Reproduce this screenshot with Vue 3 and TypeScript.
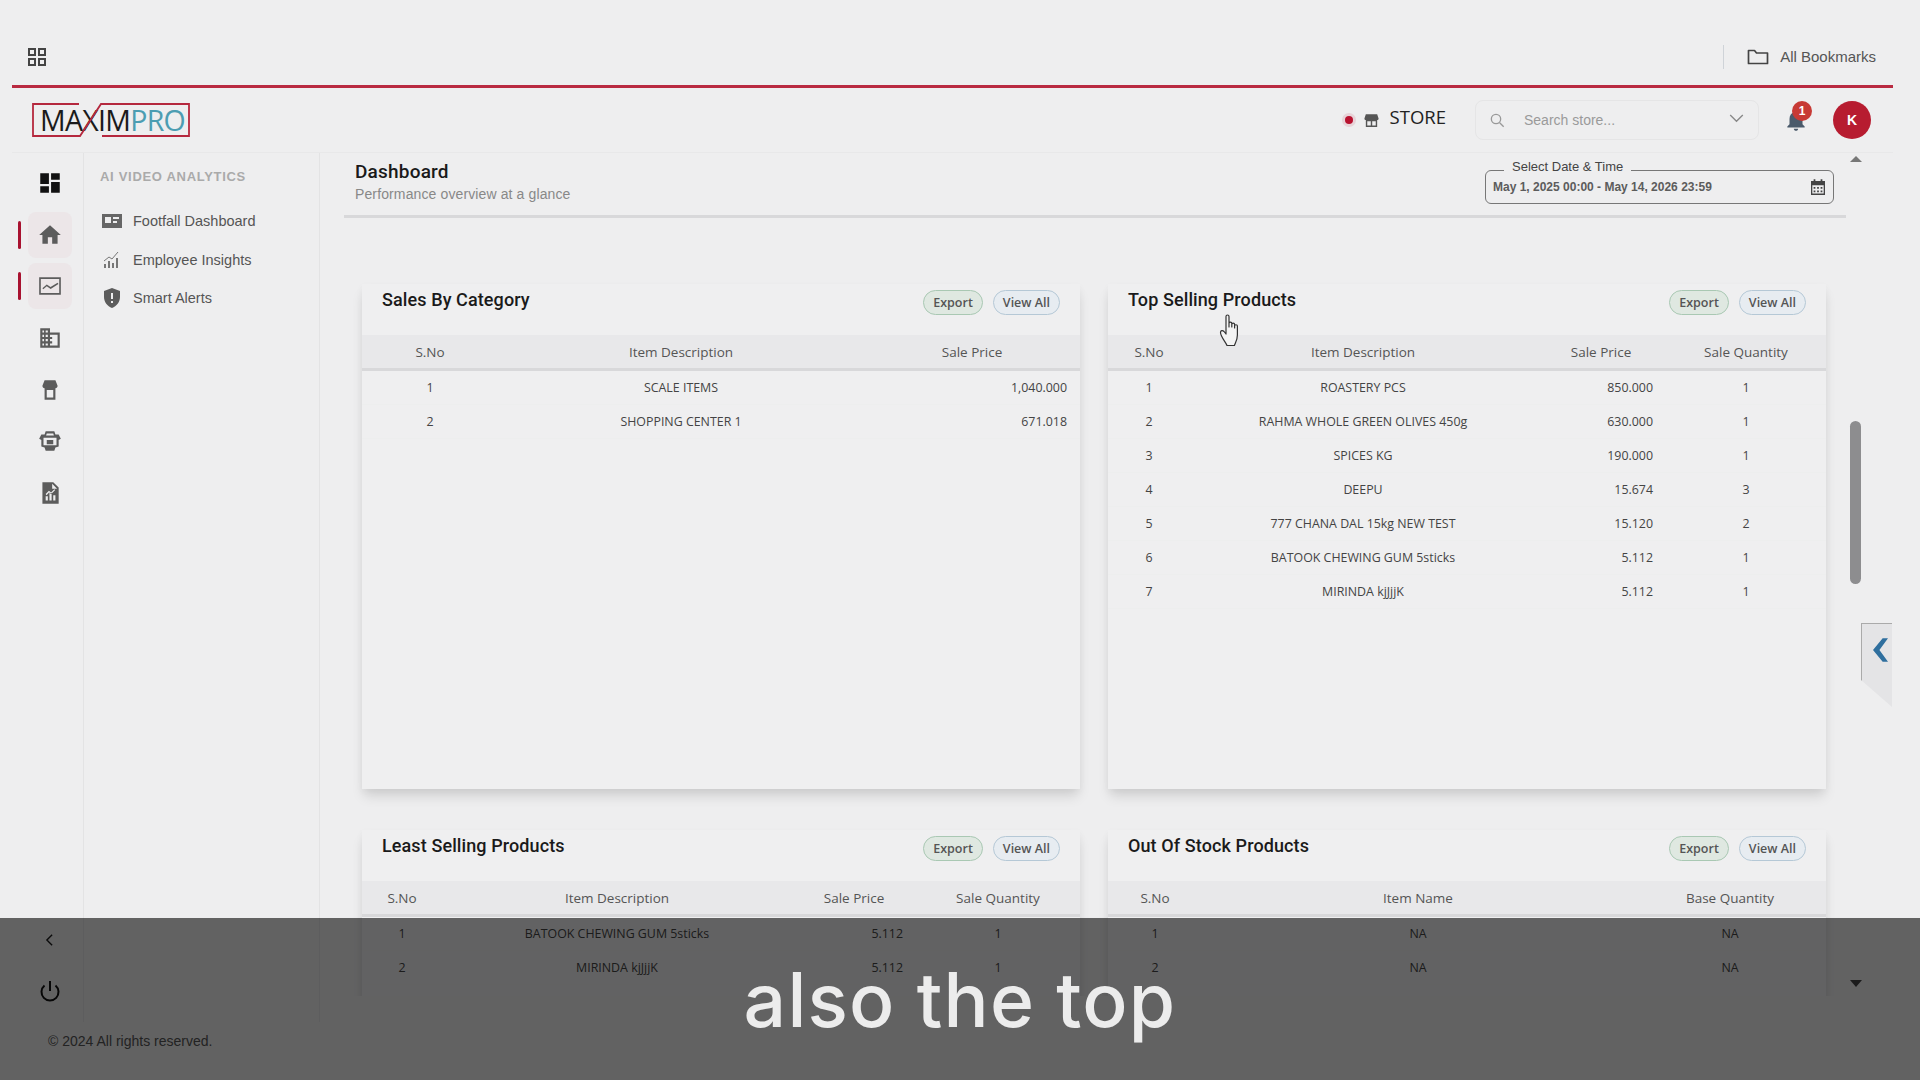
<script setup lang="ts">
interface Column {
  label: string;
  width: number;
  align?: 'right';
}

interface Card {
  title: string;
  columns: Column[];
  rows: string[][];
}

const railIcons = [
  { name: 'dashboard', path: 'M3 13h8V3H3v10zm0 8h8v-6H3v6zm10 0h8V11h-8v10zm0-18v6h8V3h-8z', active: false, dark: true },
  { name: 'home', path: 'M10 20v-6h4v6h5v-8h3L12 3 2 12h3v8z', active: true },
  { name: 'analytics', path: 'M2 4h20v16H2V4zm1.5 1.5v13h17v-13h-17zM5 14l4-3.5 3.5 2.5L19 9l.8 1.1-7.2 4.7L9 12.3l-3.2 2.8L5 14z', active: true },
  { name: 'business', path: 'M12 7V3H3v18h18V7h-9zM6.500 19H5v-2h1.500v2zm0-4H5v-2h1.500v2zm0-4H5V9h1.500v2zm0-4H5V5h1.500v2zM10 19H8v-2h2v2zm0-4H8v-2h2v2zm0-4H8V9h2v2zm0-4H8V5h2v2zm9 12h-7v-2h2v-2h-2v-2h2v-2h-2V9h7v10z', active: false },
  { name: 'store', path: 'M7 3h10l2 5c0 1.300-.8 2.200-2 2.400V21H7V10.400C5.800 10.200 5 9.300 5 8l2-5zm2 9v7h6v-7H9z', active: false },
  { name: 'package', path: 'M8 3h8l1 3h3l2 4-2 1v6l-3 1-1 3H8l-1-3-3-1v-6l-2-1 2-4h3l1-3zm1 2-.6 2h7.2L15 5H9zm-3 4v7h12V9H6zm3 2h6v4H9v-4z', active: false },
  { name: 'report', path: 'M5 2h10l5 5v15H5V2zm9 1.5V8h4.500L14 3.500zM8 19h2v-4H8v4zm3.500 0h2v-7h-2v7zm3.500 0h2v-5h-2v5zM8 13l3-3 2 1.500 3-3 .8.8-3.700 3.700-2-1.500L8.800 14 8 13z', active: false },
];

const subItems = ['Footfall Dashboard', 'Employee Insights', 'Smart Alerts'];

const cards: Card[] = [
  {
    title: 'Sales By Category',
    columns: [
      { label: 'S.No', width: 136 },
      { label: 'Item Description', width: 366 },
      { label: 'Sale Price', width: 216, align: 'right' },
    ],
    rows: [
      ['1', 'SCALE ITEMS', '1,040.000'],
      ['2', 'SHOPPING CENTER 1', '671.018'],
    ],
  },
  {
    title: 'Top Selling Products',
    columns: [
      { label: 'S.No', width: 82 },
      { label: 'Item Description', width: 346 },
      { label: 'Sale Price', width: 130, align: 'right' },
      { label: 'Sale Quantity', width: 160 },
    ],
    rows: [
      ['1', 'ROASTERY PCS', '850.000', '1'],
      ['2', 'RAHMA WHOLE GREEN OLIVES 450g', '630.000', '1'],
      ['3', 'SPICES KG', '190.000', '1'],
      ['4', 'DEEPU', '15.674', '3'],
      ['5', '777 CHANA DAL 15kg NEW TEST', '15.120', '2'],
      ['6', 'BATOOK CHEWING GUM 5sticks', '5.112', '1'],
      ['7', 'MIRINDA kjJjjK', '5.112', '1'],
    ],
  },
  {
    title: 'Least Selling Products',
    columns: [
      { label: 'S.No', width: 80 },
      { label: 'Item Description', width: 350 },
      { label: 'Sale Price', width: 124, align: 'right' },
      { label: 'Sale Quantity', width: 164 },
    ],
    rows: [
      ['1', 'BATOOK CHEWING GUM 5sticks', '5.112', '1'],
      ['2', 'MIRINDA kjJjjK', '5.112', '1'],
    ],
  },
  {
    title: 'Out Of Stock Products',
    columns: [
      { label: 'S.No', width: 94 },
      { label: 'Item Name', width: 432 },
      { label: 'Base Quantity', width: 192 },
    ],
    rows: [
      ['1', 'NA', 'NA'],
      ['2', 'NA', 'NA'],
    ],
  },
];
</script>

<template>
  <div class="app">
    <div class="browser-bar">
      <svg class="apps-icon" viewBox="0 0 20 20" width="20" height="20" fill="none" stroke="#444" stroke-width="2">
        <rect x="2" y="2" width="6" height="6" />
        <rect x="12" y="2" width="6" height="6" />
        <rect x="2" y="12" width="6" height="6" />
        <rect x="12" y="12" width="6" height="6" />
      </svg>
      <div class="bookmarks">
        <span class="bookmarks-sep"></span>
        <svg viewBox="0 0 22 18" width="22" height="18" fill="none" stroke="#444" stroke-width="1.700">
          <path d="M1.500 15.500V2.500h6l2 2.500h11v10.500z" stroke-linejoin="round" />
        </svg>
        <span>All Bookmarks</span>
      </div>
    </div>

    <div class="page">
      <header class="top-header">
        <div class="logo">
          <svg class="logo-frame" viewBox="0 0 158 34" width="158" height="34" fill="none" stroke="#b5283e" stroke-width="1.800">
            <path d="M47 1H1v32h47L69 1h88v32H70" />
          </svg>
          <span class="logo-dark">MAXIM</span><span class="logo-teal">PRO</span>
        </div>
        <div class="header-right">
          <span class="store-dot"></span>
          <svg class="store-icon" viewBox="0 0 24 24" width="17" height="17" fill="#555">
            <path d="M4 3h16l2 6c0 1.300-1 2.200-2 2.300V21H4v-9.700C3 11.200 2 10.300 2 9l2-6zm2 10v6h5v-6H6zm7 0v6h5v-6h-5z" />
          </svg>
          <span class="store-label">STORE</span>
          <div class="search">
            <svg viewBox="0 0 24 24" width="16" height="16" fill="none" stroke="#999" stroke-width="2">
              <circle cx="10.500" cy="10.500" r="7" />
              <path d="M16 16l6 6" />
            </svg>
            <span class="search-text">Search store...</span>
            <svg class="search-caret" viewBox="0 0 16 10" width="15" height="9" fill="none" stroke="#888" stroke-width="1.500">
              <path d="M1 1l7 7 7-7" />
            </svg>
          </div>
          <div class="bell">
            <svg viewBox="0 0 24 24" width="26" height="26" fill="#4a5a6b">
              <path d="M12 22c1.100 0 2-.9 2-2h-4c0 1.100.9 2 2 2zm6-6v-5c0-3.070-1.630-5.640-4.500-6.320V4c0-.83-.67-1.500-1.500-1.500s-1.500.67-1.500 1.500v.68C7.640 5.360 6 7.920 6 11v5l-2 2v1h16v-1l-2-2z" />
            </svg>
            <span class="bell-badge">1</span>
          </div>
          <div class="avatar">K</div>
        </div>
      </header>

      <div class="body">
        <nav class="rail">
          <div class="rail-list">
            <div v-for="icon in railIcons" :key="icon.name" class="rail-item" :class="{ active: icon.active }">
              <svg viewBox="0 0 24 24" width="26" height="26" :fill="icon.dark ? '#111' : '#5c5c5c'">
                <path :d="icon.path" fill-rule="evenodd" />
              </svg>
            </div>
          </div>
          <div class="rail-bottom">
            <svg viewBox="0 0 10 16" width="9" height="14" fill="none" stroke="#1c1c1c" stroke-width="1.600">
              <path d="M8 2L2 8l6 6" />
            </svg>
            <svg viewBox="0 0 24 24" width="24" height="26" fill="none" stroke="#111" stroke-width="2">
              <path d="M12 2v10" />
              <path d="M6.500 6.500a8.500 8.500 0 1 0 11 0" />
            </svg>
          </div>
        </nav>

        <aside class="subnav">
          <div class="subnav-heading">AI VIDEO ANALYTICS</div>
          <div v-for="(item, i) in subItems" :key="item" class="subnav-item">
            <svg v-if="i === 0" viewBox="0 0 20 16" width="20" height="16" fill="#666">
              <path fill-rule="evenodd" d="M0 1h20v14H0V1zm3 3v6h6V4H3zm8 0v2h6V4h-6zm0 4v2h4V8h-4z" />
            </svg>
            <svg v-else-if="i === 1" viewBox="0 0 20 20" width="20" height="20" fill="#777">
              <path d="M2 18v-4h2v4H2zm4 0v-7h2v7H6zm4 0v-5h2v5h-2zm4 0V8h2v10h-2z" />
              <path d="M2 11l5-4 3 2 6-7" fill="none" stroke="#777" stroke-width="1" />
            </svg>
            <svg v-else viewBox="0 0 20 20" width="20" height="20" fill="#5c5c5c">
              <path fill-rule="evenodd" d="M10 0l8 3v6c0 5-3.400 9-8 11-4.600-2-8-6-8-11V3l8-3zM9 5v6h2V5H9zm0 8v2h2v-2H9z" />
            </svg>
            <span>{{ item }}</span>
          </div>
        </aside>

        <main class="main">
          <div class="dash-head">
            <div>
              <h1 class="dash-title">Dashboard</h1>
              <p class="dash-sub">Performance overview at a glance</p>
            </div>
            <div class="date-field">
              <span class="date-label">Select Date &amp; Time</span>
              <span class="date-value">May 1, 2025 00:00 - May 14, 2026 23:59</span>
              <svg viewBox="0 0 16 18" width="14" height="16" fill="#444">
                <path fill-rule="evenodd" d="M3 0h2v2h6V0h2v2h3v16H0V2h3V0zM1.500 7v9.500h13V7h-13zM3 9h2v2H3V9zm4 0h2v2H7V9zm4 0h2v2h-2V9zm-8 4h2v2H3v-2zm4 0h2v2H7v-2zm4 0h2v2h-2v-2z" />
              </svg>
            </div>
          </div>

          <div class="cards">
            <section v-for="card in cards" :key="card.title" class="card">
              <div class="card-head">
                <h2 class="card-title">{{ card.title }}</h2>
                <div class="card-actions">
                  <button type="button" class="pill pill-export">Export</button>
                  <button type="button" class="pill pill-view">View All</button>
                </div>
              </div>
              <table class="data-table">
                <colgroup>
                  <col v-for="col in card.columns" :key="col.label" :style="{ width: col.width + 'px' }" />
                </colgroup>
                <thead>
                  <tr>
                    <th v-for="col in card.columns" :key="col.label">{{ col.label }}</th>
                  </tr>
                </thead>
                <tbody>
                  <tr v-for="row in card.rows" :key="row[0]">
                    <td
                      v-for="(cell, c) in row"
                      :key="c"
                      :class="{ 'cell-right': card.columns[c].align === 'right' }"
                    >
                      {{ cell }}
                    </td>
                  </tr>
                </tbody>
              </table>
            </section>
          </div>
        </main>

        <div class="scrollbar">
          <span class="arrow-up"></span>
          <span class="thumb"></span>
          <span class="arrow-down"></span>
        </div>
      </div>

      <footer class="copyright">© 2024 All rights reserved.</footer>
    </div>

    <div class="side-tab">
      <svg viewBox="0 0 14 22" width="15" height="24" fill="#2f6f9e">
        <path d="M9 0h5L6 11l8 11H9L0 11z" />
      </svg>
    </div>

    <svg class="hand" viewBox="0 0 24 33" width="24" height="33" fill="#f4f4f4" stroke="#333" stroke-width="1.200" stroke-linejoin="round">
      <path d="M7 2.500c0-2 3-2 3 0V13V9.500c0-1.800 2.800-1.800 2.800 0V13v-2.500c0-1.800 2.800-1.800 2.800 0V14v-2c0-1.700 2.800-1.700 2.800 0v9c0 5-2 7.500-3 10.500H8c-1-3-6.500-9-6.500-13 0-2 2-2.500 3.500-1L7 20V2.500z" />
    </svg>

    <div class="caption-band">
      <span class="caption">also the top</span>
    </div>
  </div>
</template>

<style scoped>
.app {
  position: relative;
  width: 1920px;
  height: 1080px;
  overflow: hidden;
  background: #eeeeef;
  font-family: "Liberation Sans", Arial, sans-serif;
  color: #333;
}

.browser-bar {
  height: 85px;
  padding: 28px 44px 0 27px;
  display: flex;
  align-items: center;
  justify-content: space-between;
  box-sizing: border-box;
}

.bookmarks {
  display: flex;
  align-items: center;
  gap: 11px;
  font-size: 15px;
  color: #555;
}

.bookmarks-sep {
  width: 1px;
  height: 24px;
  background: #cfd3d8;
  margin-right: 12px;
}

.page {
  margin: 0 27px 0 12px;
  border-top: 3px solid #b92a41;
  height: 995px;
}

.top-header {
  height: 65px;
  display: flex;
  align-items: center;
  justify-content: space-between;
  padding: 0 22px 0 20px;
  border-bottom: 1px solid #e8e8e9;
  box-sizing: border-box;
}

.logo {
  position: relative;
  width: 158px;
  height: 34px;
  font-family: "Open Sans", sans-serif;
  font-size: 28.500px;
  line-height: 34px;
  padding-left: 8px;
  box-sizing: border-box;
  white-space: nowrap;
  letter-spacing: -0.700px;
}

.logo-frame {
  position: absolute;
  left: 0;
  top: 0;
}

.logo-dark {
  color: #1b1b1b;
}

.logo-teal {
  color: #4c9db2;
}

.header-right {
  display: flex;
  align-items: center;
}

.store-dot {
  width: 8px;
  height: 8px;
  border-radius: 50%;
  background: #b8122f;
  box-shadow: 0 0 0 3px rgba(184, 18, 47, 0.12);
  margin-right: 10px;
}

.store-icon {
  margin-right: 10px;
}

.store-label {
  font-family: "Open Sans", sans-serif;
  font-size: 18.500px;
  color: #222;
  margin-right: 29px;
  margin-top: -7px;
}

.search {
  width: 284px;
  height: 40px;
  box-sizing: border-box;
  border: 1px solid #e5e5e6;
  border-radius: 8px;
  display: flex;
  align-items: center;
  padding: 0 14px 0 13px;
  gap: 19px;
  margin-right: 24px;
}

.search-text {
  font-size: 14px;
  color: #9a9a9a;
  flex: 1;
}

.search-caret {
  margin-top: -3px;
}

.bell {
  position: relative;
  width: 26px;
  height: 26px;
  margin-right: 24px;
}

.bell-badge {
  position: absolute;
  left: 9px;
  top: -6px;
  width: 20px;
  height: 20px;
  border-radius: 50%;
  background: #c73a35;
  color: #fff;
  font-size: 12px;
  font-weight: 700;
  line-height: 20px;
  text-align: center;
}

.avatar {
  width: 38px;
  height: 38px;
  border-radius: 50%;
  background: #b71c30;
  color: #fff;
  font-size: 14px;
  font-weight: 700;
  line-height: 38px;
  text-align: center;
}

.body {
  height: 869px;
  display: flex;
  align-items: flex-start;
}

.rail {
  width: 72px;
  height: 869px;
  padding: 7px 0 18px 4px;
  box-sizing: border-box;
  border-right: 1px solid #e3e3e4;
  display: flex;
  flex-direction: column;
  justify-content: space-between;
  align-items: center;
}

.rail-list {
  display: flex;
  flex-direction: column;
  gap: 5.700px;
}

.rail-item {
  position: relative;
  width: 44px;
  height: 46px;
  border-radius: 8px;
  display: flex;
  align-items: center;
  justify-content: center;
}

.rail-item.active {
  background: #ece6e8;
}

.rail-item.active::before {
  content: "";
  position: absolute;
  left: -10px;
  top: 9px;
  width: 3px;
  height: 28px;
  border-radius: 2px;
  background: #a81230;
}

.rail-bottom {
  display: flex;
  flex-direction: column;
  align-items: center;
  gap: 31px;
}

.subnav {
  width: 236px;
  height: 869px;
  box-sizing: border-box;
  padding: 16px 0 0 16px;
  border-right: 1px solid #e3e3e4;
}

.subnav-heading {
  font-size: 13px;
  font-weight: 700;
  color: #aaa;
  letter-spacing: 0.700px;
  line-height: 16px;
  margin-bottom: 17px;
}

.subnav-item {
  height: 38.500px;
  display: flex;
  align-items: center;
  gap: 11px;
  padding-left: 2px;
  font-size: 14.500px;
  color: #555;
}

.main {
  width: 1526px;
  height: 843px;
  overflow: hidden;
  flex-shrink: 0;
}

.dash-head {
  margin-left: 24px;
  height: 65px;
  box-sizing: border-box;
  border-bottom: 3px solid #d8d8da;
  padding: 9px 12px 0 11px;
  display: flex;
  justify-content: space-between;
  align-items: flex-start;
}

.dash-title {
  margin: 0;
  font-family: Roboto, sans-serif;
  font-size: 19px;
  font-weight: 500;
  line-height: 20px;
  letter-spacing: 0.200px;
  color: #1a1a1a;
}

.dash-sub {
  margin: 2px 0 0;
  font-size: 14px;
  line-height: 20px;
  letter-spacing: 0.120px;
  color: #888;
}

.date-field {
  position: relative;
  width: 349px;
  height: 34px;
  margin-top: 8px;
  box-sizing: border-box;
  border: 1.500px solid #777;
  border-radius: 6px;
  display: flex;
  align-items: center;
  justify-content: space-between;
  padding: 0 8px 0 7px;
}

.date-label {
  position: absolute;
  left: 18px;
  top: -12px;
  padding: 0 8px;
  background: #eeeeef;
  font-size: 13px;
  line-height: 15px;
  color: #444;
}

.date-value {
  font-size: 12px;
  font-weight: 700;
  color: #5c5c5c;
}

.cards {
  display: grid;
  grid-template-columns: 718px 718px;
  column-gap: 28px;
  row-gap: 41px;
  padding: 66px 0 0 42px;
}

.card {
  height: 505px;
  background: #efeff0;
  box-shadow: 0 9px 12px -2px rgba(0, 0, 0, 0.12), 0 3px 8px rgba(0, 0, 0, 0.04);
}

.card-head {
  height: 51px;
  display: flex;
  justify-content: space-between;
  align-items: flex-start;
  padding: 0 20px 0 20px;
}

.card-title {
  margin: 5px 0 0;
  font-family: Roboto, sans-serif;
  font-size: 18px;
  font-weight: 500;
  line-height: 22px;
  letter-spacing: 0.100px;
  color: #1a1a1a;
}

.card-actions {
  display: flex;
  gap: 10px;
  margin-top: 6px;
}

.pill {
  height: 25px;
  padding: 0 9px;
  border-radius: 13px;
  font-family: "Open Sans", sans-serif;
  font-size: 12.500px;
  font-weight: 600;
  color: #555;
  cursor: pointer;
}

.pill-export {
  background: #dfe8e1;
  border: 1px solid #a9c8b3;
}

.pill-view {
  background: #e7ecf1;
  border: 1px solid #b5c8d6;
}

.data-table {
  width: 718px;
  border-collapse: collapse;
  table-layout: fixed;
  font-family: "Open Sans", sans-serif;
}

.data-table th {
  height: 33px;
  padding: 0;
  background: #e8e8ea;
  border-bottom: 3px solid #d8d8da;
  font-size: 13.500px;
  font-weight: 500;
  color: #555;
  text-align: center;
}

.data-table td {
  height: 33px;
  padding: 0;
  font-size: 12.400px;
  color: #444;
  text-align: center;
  border-bottom: 1px solid #edeeee;
}

.data-table .cell-right {
  text-align: right;
  padding-right: 13px;
}

.scrollbar {
  width: 19px;
  display: flex;
  flex-direction: column;
  align-items: center;
  padding-top: 3px;
  box-sizing: border-box;
  height: 843px;
}

.thumb {
  width: 11px;
  height: 163px;
  margin-top: 259px;
  border-radius: 6px;
  background: #8d8d8f;
}

.arrow-up {
  width: 0;
  height: 0;
  border-left: 6px solid transparent;
  border-right: 6px solid transparent;
  border-bottom: 6px solid #777;
}

.arrow-down {
  width: 0;
  height: 0;
  margin-top: 396px;
  border-left: 6px solid transparent;
  border-right: 6px solid transparent;
  border-top: 7px solid #444;
}

.copyright {
  padding: 9px 0 0 36px;
  font-size: 14px;
  line-height: 20px;
  color: #555;
}

.side-tab {
  position: absolute;
  left: 1861px;
  top: 623px;
  width: 31px;
  height: 84px;
  background: #e4e4e6;
  clip-path: polygon(0 0, 100% 0, 100% 100%, 0 68%);
  display: flex;
  justify-content: center;
  padding: 14px 0 0 6px;
  box-sizing: border-box;
  border-left: 1px solid #aaa;
  border-top: 1px solid #aaa;
}

.hand {
  position: absolute;
  left: 1219px;
  top: 314px;
}

.caption-band {
  position: absolute;
  left: 0;
  right: 0;
  top: 918px;
  height: 162px;
  background: rgba(0, 0, 0, 0.59);
  display: flex;
  align-items: center;
  justify-content: center;
}

.caption {
  font-family: Inter, sans-serif;
  font-size: 75px;
  font-weight: 500;
  line-height: 1;
  letter-spacing: 1.200px;
  color: #ececec;
}
</style>
